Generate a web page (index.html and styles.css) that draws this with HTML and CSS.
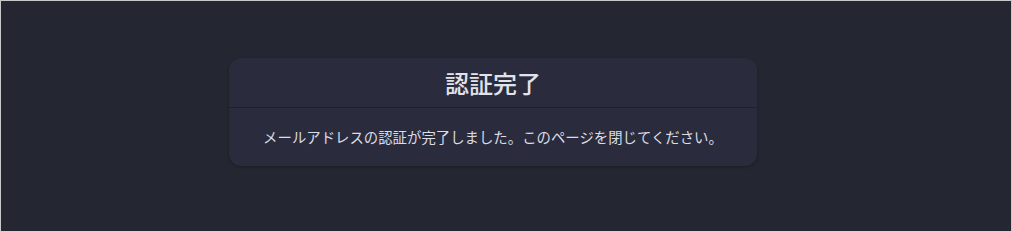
FILE: index.html
```html
<!DOCTYPE html>
<html lang="ja">
  <head>
    <meta charset="utf-8">
    <meta name="viewport" content="width=device-width, initial-scale=1">
    <title>認証完了</title>
    <link rel="stylesheet" href="styles.css">
  </head>
  <body>
    <main class="page">
      <section class="card">
        <h1 class="card_title">認証完了</h1>
        <p class="card_body">メールアドレスの認証が完了しました。このページを閉じてください。</p>
      </section>
    </main>
  </body>
</html>
```
FILE: styles.css
```css
html, body {
  margin: 0;
  height: 100%;
}

body {
  box-sizing: border-box;
  border: 1px solid #c9c9c9;
  border-bottom: none;
  background: #242631;
  font-family: "Noto Sans CJK JP", "Noto Sans", sans-serif;
  color: #dcdce4;
}

.page {
  display: flex;
  justify-content: center;
  align-items: flex-start;
  padding: 57px 26px 0 0;
}

.card {
  width: 528px;
  background: #2a2c3d;
  border-radius: 12px;
  box-shadow: 0 1px 3px rgba(0, 0, 0, 0.25);
}

.card_title {
  margin: 0;
  height: 49px;
  line-height: 49px;
  font-size: 24px;
  font-weight: 500;
  text-align: center;
  color: #e2e2ea;
  border-bottom: 1px solid #1f2029;
}

.card_body {
  margin: 0;
  height: 58px;
  line-height: 58px;
  font-size: 14.4px;
  text-align: center;
}
```
